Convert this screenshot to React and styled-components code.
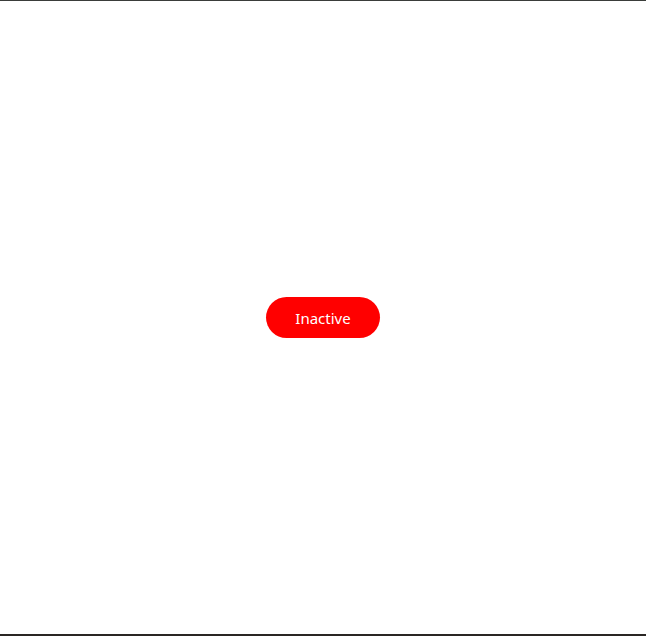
import styled, { createGlobalStyle } from 'styled-components';

const Global = createGlobalStyle`
    html, body {
        margin: 0;
        padding: 0;
        background: #ffffff;
    }
`

const App = () => {
    return (
        <>
            <Global />
            <Page>
                <StatusButton active={false}>Inactive</StatusButton>
            </Page>
        </>
    )
}

export default App;


const Page = styled.div`
    box-sizing: border-box;
    height: 636px;
    border-top: 1px solid #3a3d3a;
    border-bottom: 2px solid #2a2624;
    display: flex;
    align-items: center;
    justify-content: center;
`

const StatusButton = styled.button`
    box-sizing: border-box;
    width: 114px;
    height: 41px;
    border: none;
    border-radius: 21px;
    background: ${props => props.active ? '#1bb45a' : '#ff0000'};
    color: #ffffff;
    font-family: "Noto Sans", "Open Sans", sans-serif;
    font-size: 15px;
    cursor: pointer;
`
